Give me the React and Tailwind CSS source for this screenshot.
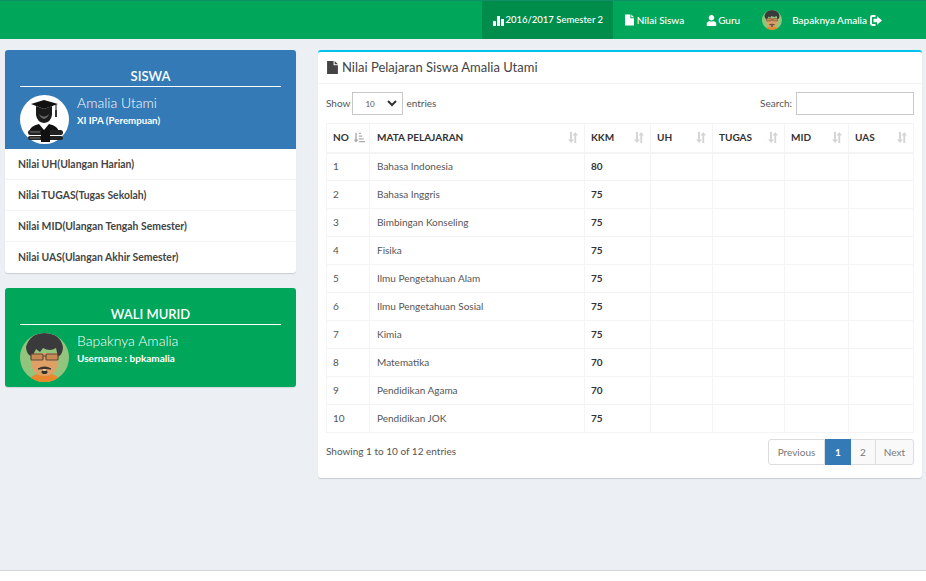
import { FaUser, FaSortAmountDownAlt } from "react-icons/fa";

const rows = [
  [1, "Bahasa Indonesia", 80],
  [2, "Bahasa Inggris", 75],
  [3, "Bimbingan Konseling", 75],
  [4, "Fisika", 75],
  [5, "Ilmu Pengetahuan Alam", 75],
  [6, "Ilmu Pengetahuan Sosial", 75],
  [7, "Kimia", 75],
  [8, "Matematika", 70],
  [9, "Pendidikan Agama", 70],
  [10, "Pendidikan JOK", 75],
];

const menu = [
  "Nilai UH(Ulangan Harian)",
  "Nilai TUGAS(Tugas Sekolah)",
  "Nilai MID(Ulangan Tengah Semester)",
  "Nilai UAS(Ulangan Akhir Semester)",
];

const heads = [
  ["MATA PELAJARAN", "w-[215px]", "pl-[7px]"],
  ["KKM", "w-[66px]", "pl-[6px]"],
  ["UH", "w-[62px]", "pl-[6px]"],
  ["TUGAS", "w-[72px]", "pl-[6px]"],
  ["MID", "w-[64px]", "pl-[6px]"],
  ["UAS", "w-[65px]", "pl-[6px]"],
];

const StatsIcon = () => (
  <svg width="11" height="11" viewBox="0 0 11 11" fill="currentColor">
    <rect x="0" y="6" width="3" height="5" />
    <rect x="4" y="1" width="3" height="10" />
    <rect x="8" y="4" width="3" height="7" />
  </svg>
);

const FileIcon = ({ className }) => (
  <svg className={className} viewBox="0 0 10 12" fill="currentColor">
    <path d="M0 0H6V4H10V12H0Z" />
    <path d="M7 0L10 3H7Z" />
  </svg>
);

const LogoutIcon = () => (
  <svg width="12" height="11" viewBox="0 0 12 11" fill="currentColor">
    <path d="M5.5 0V2H2.6Q2 2 2 2.6V8.4Q2 9 2.6 9H5.5V11H2.4Q0 11 0 8.6V2.4Q0 0 2.4 0Z" />
    <path d="M3.5 3.8H7V1.2L12 5.5L7 9.8V7.2H3.5Z" />
  </svg>
);

const SortIcon = () => (
  <svg width="11" height="11" viewBox="0 0 11 11" fill="#d5d5d5">
    <path d="M3 0H5V7.5H7L4 11L1 7.5H3Z" />
    <path d="M6.5 3.5L9.25 0L12 3.5H10.2V11H8.3V3.5Z" transform="translate(-1 0)" />
  </svg>
);

const StudentAvatar = () => (
  <svg width="49" height="49" viewBox="0 0 49 49" className="shrink-0">
    <circle cx="24.5" cy="24.5" r="24.5" fill="#fff" />
    <path d="M11 9L24 5L38 9L24 14Z" fill="#111" />
    <path d="M36 9.5V18" stroke="#111" strokeWidth="1" />
    <rect x="35" y="15" width="2" height="7" fill="#333" />
    <path d="M16 11L24 14L32 11V20Q31 27 24 28Q17 27 16 20Z" fill="#1a1a1a" />
    <path d="M19 19Q24 24 29 19Q28 23 24 24Q20 23 19 19Z" fill="#666" />
    <path d="M9 37Q10 31 19 29L24 35L29 29Q38 31 39 37Z" fill="#111" />
    <path d="M22 29L24 34L26 29Z" fill="#fff" />
    <rect x="8" y="35" width="35" height="5" rx="2.5" fill="#222" />
    <rect x="8" y="41" width="35" height="4" rx="2" fill="#222" />
    <rect x="21" y="35" width="9" height="12" fill="#111" />
    <path d="M10 37H20M10 43H20" stroke="#999" strokeWidth="0.7" />
  </svg>
);

const FatherAvatar = ({ size = 49 }) => (
  <svg width={size} height={size} viewBox="0 0 49 49" className="shrink-0">
    <defs>
      <clipPath id={`face${size}`}>
        <circle cx="24.5" cy="24.5" r="24.5" />
      </clipPath>
    </defs>
    <g clipPath={`url(#face${size})`}>
      <rect width="49" height="49" fill="#93c47d" />
      <path d="M8 49Q10 41 24.5 40Q39 41 41 49Z" fill="#e8872c" />
      <path d="M11 20H38V30Q36 43 24.5 43Q13 43 11 30Z" fill="#dfa066" />
      <path d="M6 14Q10 0 24.5 0Q40 0 43 14Q43 21 38 24L36 15Q30 19 23 15L20 19L16 16L12 24Q6 21 6 14Z" fill="#3a3a3c" />
      <rect x="11" y="21" width="12" height="6" rx="1" fill="#c98a52" stroke="#5b4a3e" strokeWidth="1.2" />
      <rect x="26" y="21" width="12" height="6" rx="1" fill="#c98a52" stroke="#5b4a3e" strokeWidth="1.2" />
      <path d="M23 23H26" stroke="#5b4a3e" strokeWidth="1.2" />
      <path d="M18 36Q24.5 32 31 36Q24.5 35 18 36Z" fill="#33302e" stroke="#33302e" />
      <ellipse cx="24.5" cy="39" rx="3" ry="2" fill="#33302e" />
      <ellipse cx="24.5" cy="37" rx="2" ry="1" fill="#f0c9a0" />
    </g>
  </svg>
);

const App = () => {
  return (
    <div className="min-h-[581px] bg-white font-['Lato',sans-serif] text-[#333]">
      <div className="min-h-[571px] border-b border-[#d2d6de] bg-[#ecf0f5]">
        <nav className="flex h-[39px] justify-end border-t border-[#0f8f63] bg-[#00a65a] pr-[44px] text-[10px] font-medium text-white">
          <a className="flex w-[131px] items-center justify-center gap-px bg-[#008d4c] pl-[2px] text-[9.5px]">
            <StatsIcon />
            2016/2017 Semester 2
          </a>
          <a className="ml-3 flex items-center gap-[3px]">
            <FileIcon className="h-[12px] w-[9px]" />
            Nilai Siswa
          </a>
          <a className="ml-[22px] flex items-center gap-px">
            <FaUser size={11} />
            Guru
          </a>
          <a className="ml-[22px] flex items-center">
            <FatherAvatar size={20} />
            <span className="ml-[10px] mr-[3px]">Bapaknya Amalia</span>
            <LogoutIcon />
          </a>
        </nav>

        <div className="flex items-start pl-[5px] pt-[11px]">
          <aside className="w-[291px] shrink-0">
            <section className="overflow-hidden rounded-[3px] bg-white shadow-[0_1px_1px_rgba(0,0,0,0.15)]">
              <div className="h-[99px] bg-[#337ab7] px-[15px] pt-[16px] text-white">
                <h2 className="border-b border-white text-center text-[13px] leading-5 font-semibold">SISWA</h2>
                <div className="mt-2 flex">
                  <StudentAvatar />
                  <div className="ml-2 -mt-[2px]">
                    <p className="text-[14px] leading-5 font-light">Amalia Utami</p>
                    <p className="text-[9.7px] leading-[14px] font-bold">XI IPA (Perempuan)</p>
                  </div>
                </div>
              </div>
              {menu.map((item) => (
                <a key={item} className="flex h-[31px] items-center border-b border-[#f4f4f4] pl-[13px] pt-px text-[10.4px] font-bold text-[#444] last:border-b-0">
                  {item}
                </a>
              ))}
            </section>

            <section className="mt-[15px] h-[99px] rounded-[3px] bg-[#00a65a] px-[15px] pt-[16px] text-white shadow-[0_1px_1px_rgba(0,0,0,0.1)]">
              <h2 className="border-b border-white text-center text-[13px] leading-5 font-semibold">WALI MURID</h2>
              <div className="mt-2 flex">
                <FatherAvatar />
                <div className="ml-2 -mt-[2px]">
                  <p className="text-[14px] leading-5 font-light">Bapaknya Amalia</p>
                  <p className="text-[10px] leading-[14px] font-bold">Username : bpkamalia</p>
                </div>
              </div>
            </section>
          </aside>

          <main className="ml-[22px] h-[428px] w-[604px] rounded-[3px] border-t-[2px] border-[#00c0ef] bg-white shadow-[0_1px_1px_rgba(0,0,0,0.15)]">
            <header className="flex h-[32px] items-center gap-1 border-b border-[#f4f4f4] pl-[9px] text-[13px] text-[#444]">
              <FileIcon className="h-[13px] w-[11px]" />
              Nilai Pelajaran Siswa Amalia Utami
            </header>

            <div className="px-2 pt-2">
              <div className="flex h-[23px] items-center justify-between text-[10px] text-[#555]">
                <div className="flex items-center">
                  Show
                  <span className="ml-[2px] mr-[3px] flex h-[23px] w-[51px] items-center justify-between border border-[#c8c8c8] pl-3 pr-[5px] text-[8px]">
                    10
                    <svg width="10" height="7" viewBox="0 0 10 7" fill="none" stroke="#333" strokeWidth="2">
                      <path d="M1 1L5 5L9 1" />
                    </svg>
                  </span>
                  entries
                </div>
                <label className="flex items-center">
                  Search:
                  <input className="ml-1 h-[23px] w-[118px] border border-[#c8c8c8]" />
                </label>
              </div>

              <table className="mt-2 w-[588px] table-fixed border-collapse text-[10px] text-[#555]">
                <thead>
                  <tr className="h-[29px] border-b-2 border-[#f4f4f4] text-left text-[10px] font-bold text-[#333]">
                    <th className="w-[43px] border border-[#f4f4f4] border-b-2 pl-[6px]">
                      <div className="flex items-center justify-between pr-1">
                        NO
                        <FaSortAmountDownAlt size={11} color="#aaa" />
                      </div>
                    </th>
                    {heads.map(([label, width, pad]) => (
                      <th key={label} className={`${width} ${pad} border border-[#f4f4f4] border-b-2`}>
                        <div className="flex items-center justify-between pr-[6px]">
                          {label}
                          <SortIcon />
                        </div>
                      </th>
                    ))}
                  </tr>
                </thead>
                <tbody>
                  {rows.map(([no, name, kkm]) => (
                    <tr key={no} className="h-[28px]">
                      <td className="border border-[#f4f4f4] pl-[6px]">{no}</td>
                      <td className="border border-[#f4f4f4] pl-[7px]">{name}</td>
                      <td className="border border-[#f4f4f4] pl-[6px] font-bold text-[#333]">{kkm}</td>
                      <td className="border border-[#f4f4f4]" />
                      <td className="border border-[#f4f4f4]" />
                      <td className="border border-[#f4f4f4]" />
                      <td className="border border-[#f4f4f4]" />
                    </tr>
                  ))}
                </tbody>
              </table>

              <div className="mt-[6px] flex items-start justify-between">
                <p className="mt-[5px] text-[10px] leading-[14px] text-[#555]">Showing 1 to 10 of 12 entries</p>
                <div className="flex h-[26px] text-[10px] text-[#777]">
                  <a className="flex w-[57px] items-center justify-center rounded-l-[3px] border border-[#ddd] bg-white">Previous</a>
                  <a className="flex w-[26px] items-center justify-center bg-[#337ab7] font-bold text-white">1</a>
                  <a className="flex w-[24px] items-center justify-center border-y border-[#ddd] bg-[#f9f9f9]">2</a>
                  <a className="flex w-[39px] items-center justify-center rounded-r-[3px] border border-[#ddd] bg-[#f9f9f9]">Next</a>
                </div>
              </div>
            </div>
          </main>
        </div>
      </div>
    </div>
  );
};

export default App;
